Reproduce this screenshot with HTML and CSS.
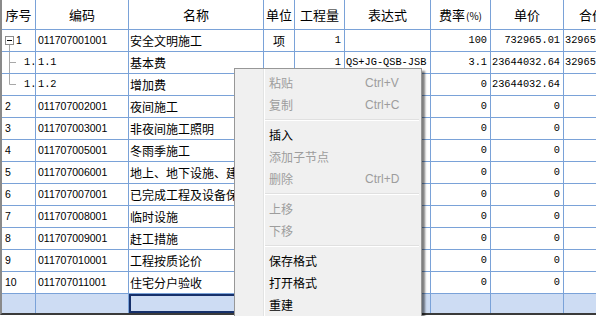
FILE: index.html
```html
<!DOCTYPE html>
<html lang="zh-CN">
  <head>
    <meta charset="UTF-8" />
    <title>措施项目</title>
    <link rel="stylesheet" href="styles.css">
  </head>
  <body>
    <div class="grid">
      <div class="row head">
        <div class="c">序号</div>
        <div class="c">编码</div>
        <div class="c">名称</div>
        <div class="c">单位</div>
        <div class="c">工程量</div>
        <div class="c">表达式</div>
        <div class="c">费率<small>(%)</small></div>
        <div class="c">单价</div>
        <div class="c">合价</div>
      </div>

      <div class="row">
        <div class="c no tree">
          <svg width="14" height="21" viewBox="0 0 14 21">
            <rect x="3.5" y="6.5" width="8" height="8" fill="#fff" stroke="#8c8c8c" />
            <line x1="5" y1="10.5" x2="10" y2="10.5" stroke="#000" />
            <line x1="7.5" y1="15" x2="7.5" y2="21" stroke="#a8a8a8" />
          </svg><span>1</span>
        </div>
        <div class="c code">011707001001</div>
        <div class="c name">安全文明施工</div>
        <div class="c unit">项</div>
        <div class="c num">1</div>
        <div class="c expr"></div>
        <div class="c num">100</div>
        <div class="c num">732965.01</div>
        <div class="c total">32965.01</div>
      </div>

      <div class="row">
        <div class="c no tree">
          <svg width="14" height="21" viewBox="0 0 14 21">
            <line x1="7.5" y1="0" x2="7.5" y2="21" stroke="#a8a8a8" />
            <line x1="7.5" y1="10.5" x2="14" y2="10.5" stroke="#a8a8a8" />
          </svg><span class="sub">1.</span>
        </div>
        <div class="c code mono">1.1</div>
        <div class="c name">基本费</div>
        <div class="c unit"></div>
        <div class="c num">1</div>
        <div class="c expr">QS+JG-QSB-JSB</div>
        <div class="c num">3.1</div>
        <div class="c num">23644032.64</div>
        <div class="c total">32965.01</div>
      </div>

      <div class="row">
        <div class="c no tree">
          <svg width="14" height="21" viewBox="0 0 14 21">
            <line x1="7.5" y1="0" x2="7.5" y2="10.5" stroke="#a8a8a8" />
            <line x1="7.5" y1="10.5" x2="14" y2="10.5" stroke="#a8a8a8" />
          </svg><span class="sub">1.</span>
        </div>
        <div class="c code mono">1.2</div>
        <div class="c name">增加费</div>
        <div class="c unit"></div>
        <div class="c num"></div>
        <div class="c expr"></div>
        <div class="c num">0</div>
        <div class="c num">23644032.64</div>
        <div class="c total"></div>
      </div>

      <div class="row">
        <div class="c no">2</div>
        <div class="c code">011707002001</div>
        <div class="c name">夜间施工</div>
        <div class="c unit"></div>
        <div class="c num"></div>
        <div class="c expr"></div>
        <div class="c num">0</div>
        <div class="c num">0</div>
        <div class="c total"></div>
      </div>

      <div class="row">
        <div class="c no">3</div>
        <div class="c code">011707003001</div>
        <div class="c name">非夜间施工照明</div>
        <div class="c unit"></div>
        <div class="c num"></div>
        <div class="c expr"></div>
        <div class="c num">0</div>
        <div class="c num">0</div>
        <div class="c total"></div>
      </div>

      <div class="row">
        <div class="c no">4</div>
        <div class="c code">011707005001</div>
        <div class="c name">冬雨季施工</div>
        <div class="c unit"></div>
        <div class="c num"></div>
        <div class="c expr"></div>
        <div class="c num">0</div>
        <div class="c num">0</div>
        <div class="c total"></div>
      </div>

      <div class="row">
        <div class="c no">5</div>
        <div class="c code">011707006001</div>
        <div class="c name">地上、地下设施、建筑物的临时保护设施</div>
        <div class="c unit"></div>
        <div class="c num"></div>
        <div class="c expr"></div>
        <div class="c num">0</div>
        <div class="c num">0</div>
        <div class="c total"></div>
      </div>

      <div class="row">
        <div class="c no">6</div>
        <div class="c code">011707007001</div>
        <div class="c name">已完成工程及设备保护</div>
        <div class="c unit"></div>
        <div class="c num"></div>
        <div class="c expr"></div>
        <div class="c num">0</div>
        <div class="c num">0</div>
        <div class="c total"></div>
      </div>

      <div class="row">
        <div class="c no">7</div>
        <div class="c code">011707008001</div>
        <div class="c name">临时设施</div>
        <div class="c unit"></div>
        <div class="c num"></div>
        <div class="c expr"></div>
        <div class="c num">0</div>
        <div class="c num">0</div>
        <div class="c total"></div>
      </div>

      <div class="row">
        <div class="c no">8</div>
        <div class="c code">011707009001</div>
        <div class="c name">赶工措施</div>
        <div class="c unit"></div>
        <div class="c num"></div>
        <div class="c expr"></div>
        <div class="c num">0</div>
        <div class="c num">0</div>
        <div class="c total"></div>
      </div>

      <div class="row">
        <div class="c no">9</div>
        <div class="c code">011707010001</div>
        <div class="c name">工程按质论价</div>
        <div class="c unit"></div>
        <div class="c num"></div>
        <div class="c expr"></div>
        <div class="c num">0</div>
        <div class="c num">0</div>
        <div class="c total"></div>
      </div>

      <div class="row">
        <div class="c no">10</div>
        <div class="c code">011707011001</div>
        <div class="c name">住宅分户验收</div>
        <div class="c unit"></div>
        <div class="c num"></div>
        <div class="c expr"></div>
        <div class="c num">0</div>
        <div class="c num">0</div>
        <div class="c total"></div>
      </div>

      <div class="row sel">
        <div class="c"></div>
        <div class="c"></div>
        <div class="c focus"></div>
        <div class="c"></div>
        <div class="c"></div>
        <div class="c"></div>
        <div class="c"></div>
        <div class="c"></div>
        <div class="c"></div>
      </div>
    </div>

    <!-- 右键菜单 -->
    <div class="menu">
      <div class="item off"><span>粘贴</span><span class="key">Ctrl+V</span></div>
      <div class="item off"><span>复制</span><span class="key">Ctrl+C</span></div>
      <div class="sep"></div>
      <div class="item"><span>插入</span></div>
      <div class="item off"><span>添加子节点</span></div>
      <div class="item off"><span>删除</span><span class="key">Ctrl+D</span></div>
      <div class="sep"></div>
      <div class="item off"><span>上移</span></div>
      <div class="item off"><span>下移</span></div>
      <div class="sep"></div>
      <div class="item"><span>保存格式</span></div>
      <div class="item"><span>打开格式</span></div>
      <div class="item"><span>重建</span></div>
    </div>
  </body>
</html>
```

FILE: styles.css
```css
body {
  margin: 0;
  width: 596px;
  height: 316px;
  overflow: hidden;
  background: #fff;
  font-family: "Noto Sans CJK SC", sans-serif;
  font-size: 12px;
  color: #000;
}
.grid {
  width: 616px;
  border-left: 2px solid #8a8a8a;
  border-bottom: 2px solid #3a3a3a;
}
.row {
  display: grid;
  grid-template-columns: 34px 93px 135px 31px 50px 86px 60px 73px 57px;
  height: 22px;
  border-bottom: 1px solid #7aa2d8;
  box-sizing: border-box;
}
.c {
  border-right: 1px solid #7aa2d8;
  box-sizing: border-box;
  line-height: 21px;
  white-space: nowrap;
  overflow: hidden;
}
.head {
  height: 30px;
}
.head .c {
  line-height: 29px;
  text-align: center;
  font-size: 13px;
}
.head small {
  font-size: 10px;
  margin-left: 1px;
}
.no {
  padding-left: 3px;
  font-family: "Liberation Sans", sans-serif;
  font-size: 10.5px;
}
.tree {
  padding-left: 0;
  display: flex;
  align-items: flex-start;
}
.tree svg {
  display: block;
  flex-shrink: 0;
}
.tree .sub {
  margin-left: 8px;
  font-family: "Liberation Mono", monospace;
  font-size: 10.3px;
}
.code {
  padding-left: 2px;
  font-family: "Liberation Sans", sans-serif;
  font-size: 10.5px;
}
.code.mono {
  font-family: "Liberation Mono", monospace;
  font-size: 10.3px;
}
.name {
  padding-left: 1px;
}
.unit {
  text-align: center;
}
.num {
  text-align: right;
  padding-right: 3px;
  font-family: "Liberation Mono", monospace;
  font-size: 10.3px;
}
.expr,
.total {
  padding-left: 1px;
  font-family: "Liberation Mono", monospace;
  font-size: 10.3px;
}
.sel {
  height: 19px;
  border-bottom: none;
}
.sel .c {
  background: #cddcf3;
}
.sel .focus {
  box-shadow: inset 0 0 0 2px #16306a;
}

.menu {
  position: absolute;
  left: 234px;
  top: 68px;
  width: 188px;
  height: 262px;
  box-sizing: border-box;
  padding: 3px 2px;
  border: 1px solid #979797;
  background: linear-gradient(to right, transparent 28px, #e2e3e3 28px, #e2e3e3 29px, #fff 29px, #fff 30px, transparent 30px), #f0f0f0;
  box-shadow: 3px 3px 2px rgba(0, 0, 0, 0.5);
}
.item {
  display: grid;
  grid-template-columns: 96px auto;
  height: 22px;
  line-height: 22px;
  padding-left: 32px;
}
.item.off {
  color: #9d9d9d;
}
.key {
  font-family: "Liberation Sans", sans-serif;
  font-size: 12px;
}
.sep {
  height: 8px;
  margin-left: 28px;
  background: linear-gradient(#e0e0e0, #e0e0e0) 0 3px / 100% 1px no-repeat,
    linear-gradient(#fff, #fff) 0 4px / 100% 1px no-repeat;
}
```
